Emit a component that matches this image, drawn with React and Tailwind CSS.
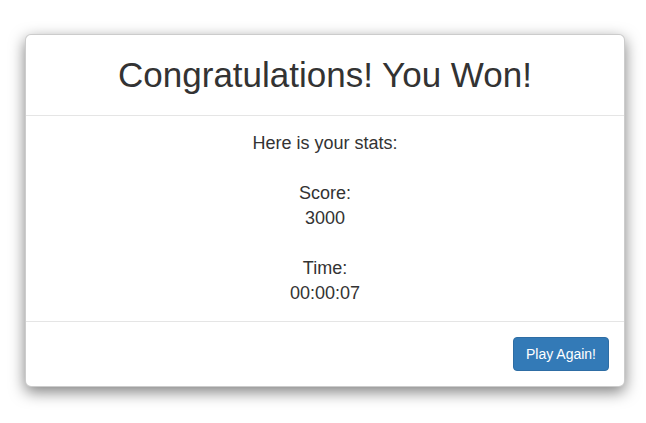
export default function App() {
  return (
    <div className="min-h-[423px] w-[646px] bg-white" style={{ fontFamily: '"Liberation Sans", Arial, sans-serif' }}>
      <div className="pt-[34px] pl-[25px]">
        <div className="w-[600px] rounded-[6px] border border-[rgba(0,0,0,0.2)] bg-white text-[#333] shadow-[0_5px_15px_rgba(0,0,0,0.5)]">
          <div className="border-b border-[#e5e5e5] p-[15px]">
            <h1 className="m-0 text-center text-[35px] leading-[50px] font-normal">Congratulations! You Won!</h1>
          </div>
          <div className="p-[15px] text-center text-[18px] leading-[25px]">
            <div>Here is your stats:</div>
            <div>&nbsp;</div>
            <div>Score:</div>
            <div>3000</div>
            <div>&nbsp;</div>
            <div>Time:</div>
            <div>00:00:07</div>
          </div>
          <div className="flex justify-end border-t border-[#e5e5e5] p-[15px]">
            <button className="rounded-[4px] border border-[#2e6da4] bg-[#337ab7] px-[12px] py-[6px] text-[14px] leading-[20px] text-white">
              Play Again!
            </button>
          </div>
        </div>
      </div>
    </div>
  );
}
